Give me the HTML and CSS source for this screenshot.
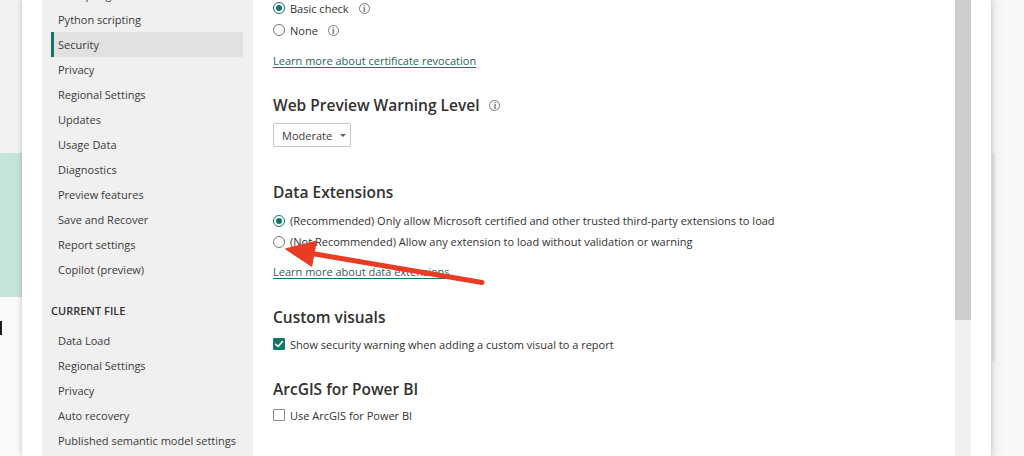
FILE: index.html
```html
<!DOCTYPE html>
<html lang="en">
<head>
<meta charset="utf-8">
<title>Options - Security</title>
<link rel="stylesheet" href="styles.css">
</head>
<body>
<div class="stage">
  <div class="backdrop-left">
    <div class="bl-top"></div>
    <div class="bl-mint"></div>
    <div class="bl-bottom"><span class="glyph-cut"></span></div>
  </div>

  <div class="dialog">
    <nav class="sidebar">
      <ul class="nav nav-global">
        <li>R scripting</li>
        <li>Python scripting</li>
        <li class="active">Security</li>
        <li>Privacy</li>
        <li>Regional Settings</li>
        <li>Updates</li>
        <li>Usage Data</li>
        <li>Diagnostics</li>
        <li>Preview features</li>
        <li>Save and Recover</li>
        <li>Report settings</li>
        <li>Copilot (preview)</li>
      </ul>
      <div class="nav-heading">CURRENT FILE</div>
      <ul class="nav">
        <li>Data Load</li>
        <li>Regional Settings</li>
        <li>Privacy</li>
        <li>Auto recovery</li>
        <li>Published semantic model settings</li>
      </ul>
    </nav>

    <main class="content">
      <div class="scroll-body">
        <div class="opt-row r1 first">
          <span class="radio checked"></span><span class="opt-text">Basic check</span><span class="info">i</span>
        </div>
        <div class="opt-row r1">
          <span class="radio"></span><span class="opt-text">None</span><span class="info">i</span>
        </div>
        <a class="learn l1">Learn more about certificate revocation</a>

        <h2 class="section-title t-web">Web Preview Warning Level <span class="info info-lg">i</span></h2>
        <div class="dropdown">Moderate <span class="caret"></span></div>

        <h2 class="section-title t-data">Data Extensions</h2>
        <div class="opt-row r2">
          <span class="radio checked"></span><span class="opt-text">(Recommended) Only allow Microsoft certified and other trusted third-party extensions to load</span>
        </div>
        <div class="opt-row r2">
          <span class="radio"></span><span class="opt-text">(Not Recommended) Allow any extension to load without validation or warning</span>
        </div>
        <a class="learn l2">Learn more about data extensions</a>

        <h2 class="section-title t-custom">Custom visuals</h2>
        <div class="opt-row r3">
          <span class="check checked"><svg viewBox="0 0 12 12" width="12" height="12"><path d="M2.6 6.2 L5 8.5 L9.5 3.6" fill="none" stroke="#fff" stroke-width="1.5" stroke-linecap="round" stroke-linejoin="round"/></svg></span><span class="opt-text">Show security warning when adding a custom visual to a report</span>
        </div>

        <h2 class="section-title t-arc">ArcGIS for Power BI</h2>
        <div class="opt-row r4">
          <span class="check"></span><span class="opt-text">Use ArcGIS for Power BI</span>
        </div>

        <h2 class="section-title t-map">Map and Filled Map visuals</h2>
      </div>
      <div class="scrollbar"><div class="thumb"></div></div>
    </main>
  </div>

  <div class="backdrop-right"><div class="br-line"></div></div>

  <svg class="annotation" viewBox="0 0 1024 456" width="1024" height="456" aria-hidden="true">
    <line x1="312" y1="253.5" x2="482" y2="282.5" stroke="#ea3b24" stroke-width="5" stroke-linecap="round"/>
    <polygon points="286,249 316,241.5 311.5,266" fill="#ea3b24" stroke="#ea3b24" stroke-width="1.5" stroke-linejoin="round"/>
  </svg>
</div>
</body>
</html>
```

FILE: styles.css
```css
* { box-sizing: border-box; }

html, body {
  margin: 0;
  padding: 0;
}

body {
  font-family: "Segoe UI", "Open Sans", "Noto Sans", sans-serif;
  font-size: 11px;
  color: #333333;
  background: #f6f6f6;
}

.stage {
  position: relative;
  display: flex;
  width: 1024px;
  height: 456px;
  overflow: hidden;
}

/* backdrop left */
.backdrop-left {
  width: 22px;
  flex: none;
  display: flex;
  flex-direction: column;
}
.bl-top {
  height: 153px;
  flex: none;
  background: #f2f2f2;
}
.bl-mint {
  height: 144px;
  flex: none;
  background: #c6e5d8;
}
.bl-bottom {
  flex: 1;
  background: #fafafa;
  padding-top: 24px;
}
.glyph-cut {
  display: block;
  width: 2px;
  height: 14px;
  background: #1d1d1d;
}

/* dialog */
.dialog {
  position: relative;
  z-index: 1;
  width: 969px;
  flex: none;
  display: flex;
  padding-left: 20px;
  background: #ffffff;
  box-shadow: 0 0 6px rgba(0, 0, 0, 0.22);
}

.sidebar {
  width: 211px;
  flex: none;
  background: #f0f0f0;
  padding: 0 10px 0 9px;
  overflow: hidden;
}

.nav {
  list-style: none;
  margin: 0;
  padding: 0;
}
.nav-global {
  margin-top: -18px;
}
.nav li {
  height: 25px;
  line-height: 25px;
  padding-left: 4px;
  border-left: 3px solid transparent;
  color: #3b3a39;
  white-space: nowrap;
}
.nav li.active {
  background: #e1e1e1;
  border-left-color: #117865;
}
.nav-heading {
  margin: 19px 0 7px;
  height: 20px;
  line-height: 20px;
  font-weight: 600;
  color: #323130;
}

/* main content */
.content {
  flex: 1;
  display: flex;
  min-width: 0;
}
.scroll-body {
  flex: 1;
  padding-left: 20px;
  display: flex;
  flex-direction: column;
  align-items: flex-start;
  overflow: hidden;
}
.scroll-body > * {
  flex-shrink: 0;
}
.scrollbar {
  width: 16px;
  flex: none;
  margin-right: 20px;
  background: #f0f0f0;
}
.thumb {
  height: 320px;
  background: #cdcdcd;
}

.opt-row {
  display: flex;
  align-items: center;
  color: #323130;
  white-space: nowrap;
}
.r1 { height: 22px; }
.r1.first { margin-top: -3px; }
.r2 { height: 21px; }
.r3 { height: 22px; margin-top: 4px; }
.r4 { height: 22px; margin-top: 3px; }

.opt-text {
  margin-left: 5px;
}

.radio {
  width: 12px;
  height: 12px;
  border-radius: 50%;
  border: 1px solid #7a7876;
  background: #fff;
  flex: none;
  position: relative;
}
.radio.checked {
  border-color: #117865;
}
.radio.checked::after {
  content: "";
  position: absolute;
  left: 2px;
  top: 2px;
  width: 6px;
  height: 6px;
  border-radius: 50%;
  background: #117865;
}

.check {
  width: 12px;
  height: 12px;
  border: 1px solid #8a8886;
  border-radius: 1px;
  background: #fff;
  flex: none;
  display: flex;
}
.check.checked {
  background: #117865;
  border-color: #117865;
}
.check svg {
  margin: -1px;
}

.info {
  width: 11px;
  height: 11px;
  border: 1px solid #7a7876;
  border-radius: 50%;
  color: #6b6a69;
  font-size: 8px;
  line-height: 9px;
  text-align: center;
  font-weight: 700;
  margin-left: 10px;
  display: inline-block;
  flex: none;
}
.info-lg {
  vertical-align: 2px;
  margin-left: 6px;
}

.learn {
  display: block;
  height: 16px;
  line-height: 16px;
  color: #2c5f58;
  text-decoration: underline;
  text-decoration-color: #117865;
  text-underline-offset: 2px;
  white-space: nowrap;
}
.l1 { margin-top: 12px; }
.l2 { margin-top: 12px; }

.section-title {
  margin: 0;
  height: 24px;
  line-height: 24px;
  font-size: 15.5px;
  font-weight: 600;
  color: #323130;
  white-space: nowrap;
}
.t-web { margin-top: 24px; }
.t-data { margin-top: 33px; margin-bottom: 6px; }
.t-custom { margin-top: 25px; }
.t-arc { margin-top: 22px; }
.t-map { margin-top: 23.5px; }

.dropdown {
  margin-top: 6px;
  height: 24px;
  width: 78px;
  border: 1px solid #c8c6c4;
  border-radius: 2px;
  padding-left: 8px;
  display: flex;
  align-items: center;
  color: #3b3a39;
}
.caret {
  margin-left: 8px;
  width: 0;
  height: 0;
  border-left: 3px solid transparent;
  border-right: 3px solid transparent;
  border-top: 3px solid #605e5c;
}

/* backdrop right */
.backdrop-right {
  flex: 1;
  background: linear-gradient(to right, #efefef, #f8f8f8 40%, #f9f9f9);
  padding-top: 153px;
}
.br-line {
  height: 208px;
  width: 3px;
  margin-left: 1px;
  background: #e4e4e4;
}

/* annotation arrow */
.annotation {
  position: absolute;
  left: 0;
  top: 0;
  z-index: 5;
  pointer-events: none;
}
```
